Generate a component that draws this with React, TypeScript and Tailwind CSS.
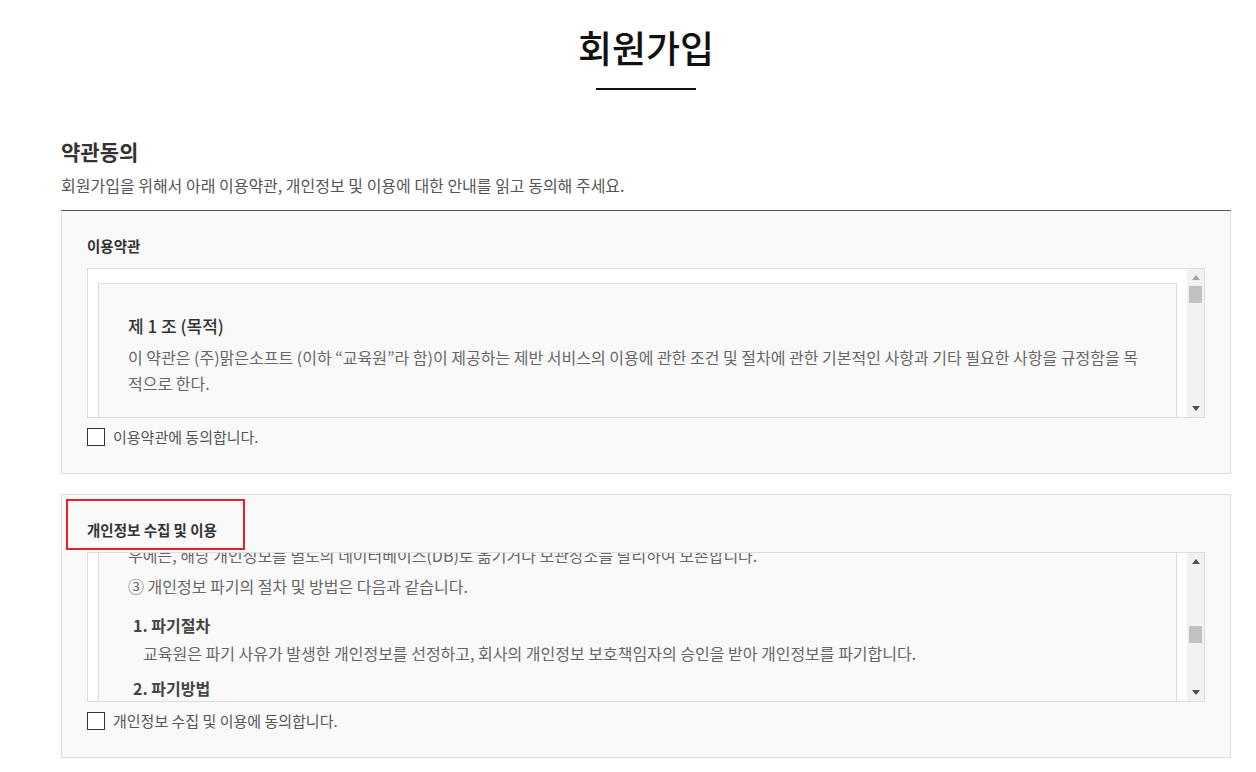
import { useLayoutEffect, useRef } from 'react';

function Arrow({ up, color }: { up?: boolean; color: string }) {
  return (
    <div className="h-[17px] flex items-center justify-center">
      <svg width="8" height="5" viewBox="0 0 8 5">
        {up ? <path d="M0 5 L4 0 L8 5 Z" fill={color} /> : <path d="M0 0 L8 0 L4 5 Z" fill={color} />}
      </svg>
    </div>
  );
}

function FakeScrollbar({ thumbTop, upColor }: { thumbTop: number; upColor: string }) {
  return (
    <div className="w-[17px] shrink-0 bg-[#f1f1f1] flex flex-col">
      <Arrow up color={upColor} />
      <div className="flex-1">
        <div className="mx-[2px] h-[17px] bg-[#c1c1c1]" style={{ marginTop: thumbTop }} />
      </div>
      <Arrow color="#505050" />
    </div>
  );
}

function AgreeCheck({ label }: { label: string }) {
  return (
    <label className="mt-[10px] flex items-center h-[18px] cursor-pointer">
      <input type="checkbox" className="appearance-none w-[18px] h-[18px] border border-[#333] bg-white m-0" />
      <span className="ml-[8px] text-[15px] leading-[18px] text-[#555]">{label}</span>
    </label>
  );
}

function TermsText() {
  return (
    <div className="border border-[#ddd] bg-[#f9f9f9] px-[29px] pt-[29px] pb-[30px] text-[16px] leading-[26px] text-[#666]">
      <h4 className="text-[17px] leading-[26px] font-medium text-[#333]">제 1 조 (목적)</h4>
      <p className="mt-[5px]">
        이 약관은 (주)맑은소프트 (이하 “교육원”라 함)이 제공하는 제반 서비스의 이용에 관한 조건 및 절차에 관한 기본적인 사항과 기타 필요한 사항을 규정함을 목적으로 한다.
      </p>
      <h4 className="mt-[34px] text-[17px] leading-[26px] font-medium text-[#333]">제 2 조 (약관의 효력 및 변경)</h4>
      <p className="mt-[5px]">① 이 약관은 서비스 화면이나 기타의 방법으로 이용고객에게 공지함으로써 효력을 발생합니다.</p>
      <p className="mt-[5px]">② 교육원은 사정 변경의 경우와 영업상 중요사유가 있을 때 약관을 변경할 수 있으며, 변경된 약관은 전항과 같은 방법으로 효력을 발생합니다.</p>
      <h4 className="mt-[34px] text-[17px] leading-[26px] font-medium text-[#333]">제 3 조 (약관 외 준칙)</h4>
      <p className="mt-[5px]">이 약관에 명시되지 않은 사항이 관계법령에 규정되어 있을 경우에는 그 규정에 따릅니다.</p>
      <h4 className="mt-[34px] text-[17px] leading-[26px] font-medium text-[#333]">제 4 조 (용어의 정의)</h4>
      <p className="mt-[5px]">① 회원 : 교육원과 서비스 이용계약을 체결하고 이용자 아이디(ID)를 부여받은 자를 말합니다.</p>
      <p className="mt-[5px]">② 아이디(ID) : 회원의 식별과 서비스 이용을 위하여 회원이 정하고 교육원이 승인하는 문자와 숫자의 조합을 말합니다.</p>
      <p className="mt-[5px]">③ 비밀번호 : 회원이 부여받은 아이디와 일치된 회원임을 확인하고 회원 자신의 비밀을 보호하기 위하여 회원이 정한 문자와 숫자의 조합을 말합니다.</p>
      <p className="mt-[5px]">④ 해지 : 교육원 또는 회원이 서비스 이용계약을 해약하는 것을 말합니다.</p>
      <h4 className="mt-[34px] text-[17px] leading-[26px] font-medium text-[#333]">제 5 조 (이용계약의 성립)</h4>
      <p className="mt-[5px]">이용계약은 이용자의 이용신청에 대한 교육원의 승낙과 이용자의 약관 내용에 대한 동의로 성립됩니다.</p>
    </div>
  );
}

function PrivacyText({ markRef }: { markRef: React.RefObject<HTMLParagraphElement | null> }) {
  return (
    <div className="border border-[#ddd] bg-[#f9f9f9] px-[29px] pt-[29px] pb-[30px] text-[16px] leading-[26px] text-[#666]">
      <h4 className="text-[17px] leading-[26px] font-medium text-[#333]">1. 수집하는 개인정보 항목</h4>
      <p className="mt-[5px]">교육원은 회원가입, 원활한 고객상담, 각종 서비스의 제공을 위해 아래와 같은 개인정보를 수집하고 있습니다.</p>
      <p className="mt-[5px]">① 필수항목 : 이름, 아이디, 비밀번호, 휴대전화번호, 이메일</p>
      <p className="mt-[5px]">② 선택항목 : 주소, 전화번호, 생년월일</p>
      <h4 className="mt-[30px] text-[17px] leading-[26px] font-medium text-[#333]">2. 개인정보의 수집 및 이용목적</h4>
      <p className="mt-[5px]">① 서비스 제공에 관한 계약 이행 및 서비스 제공에 따른 요금정산</p>
      <p className="mt-[5px]">② 회원 관리 : 회원제 서비스 이용에 따른 본인확인, 개인 식별, 불량회원의 부정 이용 방지와 비인가 사용 방지</p>
      <h4 className="mt-[30px] text-[17px] leading-[26px] font-medium text-[#333]">3. 개인정보의 보유 및 이용기간</h4>
      <p className="mt-[5px]">① 이용자의 개인정보는 원칙적으로 개인정보의 수집 및 이용목적이 달성되면 지체 없이 파기합니다.</p>
      <p className="mt-[5px]">
        ② 이용자로부터 동의받은 개인정보 보유기간이 경과하거나 처리목적이 달성되었음에도 불구하고 다른 법령에 따라 보존하여야 하는 경
        <br />
        우에는, 해당 개인정보를 별도의 데이터베이스(DB)로 옮기거나 보관장소를 달리하여 보존합니다.
      </p>
      <p ref={markRef} className="mt-[5px]">③ 개인정보 파기의 절차 및 방법은 다음과 같습니다.</p>
      <dl className="mt-[13px]">
        <dt className="pl-[5px] font-bold text-[#444]">1. 파기절차</dt>
        <dd className="mt-[2px] pl-[15px]">교육원은 파기 사유가 발생한 개인정보를 선정하고, 회사의 개인정보 보호책임자의 승인을 받아 개인정보를 파기합니다.</dd>
        <dt className="mt-[9px] pl-[5px] font-bold text-[#444]">2. 파기방법</dt>
        <dd className="mt-[2px] pl-[15px]">전자적 파일 형태로 저장된 개인정보는 기록을 재생할 수 없는 기술적 방법을 사용하여 삭제합니다.</dd>
        <dd className="mt-[2px] pl-[15px]">종이에 출력된 개인정보는 분쇄기로 분쇄하거나 소각을 통하여 파기합니다.</dd>
      </dl>
    </div>
  );
}

export default function App() {
  const scrollRef = useRef<HTMLDivElement>(null);
  const markRef = useRef<HTMLParagraphElement>(null);

  useLayoutEffect(() => {
    if (scrollRef.current && markRef.current) {
      scrollRef.current.scrollTop = markRef.current.offsetTop - 20;
    }
  }, []);

  return (
    <div className="min-h-screen bg-white font-['Noto_Sans_CJK_KR','Noto_Sans',sans-serif]">
      <div className="ml-[61px] w-[1170px] pt-[20px] pb-[40px]">
        <div className="flex flex-col items-center">
          <h2 className="text-[37px] leading-[54px] font-medium text-[#111]">회원가입</h2>
          <div className="mt-[14px] w-[100px] h-[2px] bg-[#111]" />
        </div>

        <h3 className="mt-[46px] text-[21px] leading-[30px] font-bold text-[#333]">약관동의</h3>
        <p className="mt-[8px] text-[16px] leading-[22px] text-[#555]">
          회원가입을 위해서 아래 이용약관, 개인정보 및 이용에 대한 안내를 읽고 동의해 주세요.
        </p>

        <section className="mt-[14px] border border-[#ddd] border-t-[#555] bg-[#f9f9f9] px-[25px] pt-[25px] pb-[27px]">
          <h4 className="text-[14.5px] leading-[20px] font-bold text-[#333]">이용약관</h4>
          <div className="mt-[12px] h-[150px] flex border border-[#ddd] bg-white">
            <div className="flex-1 overflow-hidden px-[10px] pt-[14px]">
              <TermsText />
            </div>
            <FakeScrollbar thumbTop={0} upColor="#a3a3a3" />
          </div>
          <AgreeCheck label="이용약관에 동의합니다." />
        </section>

        <section className="relative mt-[20px] border border-[#ddd] bg-[#f9f9f9] px-[25px] pt-[25px] pb-[27px]">
          <div className="absolute left-[4px] top-[4px] w-[179px] h-[51px] border-2 border-[#e8202a]" />
          <h4 className="text-[14.5px] leading-[20px] font-bold text-[#333]">개인정보 수집 및 이용</h4>
          <div className="mt-[12px] h-[150px] flex border border-[#ddd] bg-white">
            <div ref={scrollRef} className="relative flex-1 overflow-hidden px-[10px] pt-[14px]">
              <PrivacyText markRef={markRef} />
            </div>
            <FakeScrollbar thumbTop={56} upColor="#505050" />
          </div>
          <AgreeCheck label="개인정보 수집 및 이용에 동의합니다." />
        </section>
      </div>
    </div>
  );
}
